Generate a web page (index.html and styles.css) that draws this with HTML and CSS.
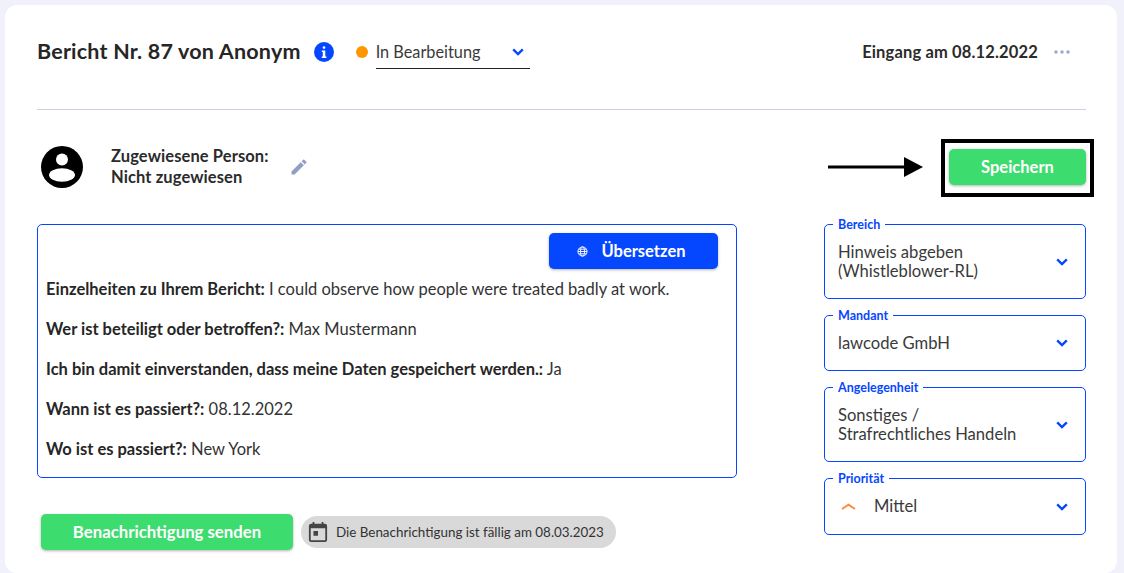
FILE: index.html
```html
<!DOCTYPE html>
<html lang="de">
  <head>
    <meta charset="UTF-8" />
    <title>Bericht Nr. 87</title>
    <link rel="stylesheet" href="styles.css">
  </head>

  <body>
    <div class="card">
      <div class="report-head">
        <h1>Bericht Nr. 87 von Anonym</h1>
        <svg class="info-icon" viewBox="0 0 20 20">
          <circle cx="10" cy="10" r="10" fill="#0547ff" />
          <rect x="8.7" y="4.3" width="2.6" height="2.6" rx="1.3" fill="#fff" />
          <path d="M7.8 8.4h3.5v6h1.1v1.5H7.8v-1.5h1v-4.5h-1z" fill="#fff" />
        </svg>
        <span class="status-dot"></span>
        <div class="status-select">
          <span>In Bearbeitung</span>
          <svg class="chevron" viewBox="0 0 12 8"><path d="M1.2 1.4 6 6l4.8-4.6" /></svg>
        </div>
        <div class="received">Eingang am 08.12.2022</div>
        <svg class="more-icon" viewBox="0 0 16 4">
          <circle cx="2" cy="2" r="1.7" />
          <circle cx="8" cy="2" r="1.7" />
          <circle cx="14" cy="2" r="1.7" />
        </svg>
      </div>

      <div class="assign-row">
        <div class="person">
          <svg class="avatar" viewBox="0 0 42 42">
            <circle cx="21" cy="21" r="21" fill="#000" />
            <circle cx="21" cy="13.5" r="6" fill="#fff" />
            <ellipse cx="21" cy="29" rx="13" ry="6.8" fill="#fff" />
          </svg>
          <div class="person-text">
            <div>Zugewiesene Person:</div>
            <div>Nicht zugewiesen</div>
          </div>
          <svg class="pencil" viewBox="0 0 24 24">
            <path d="M3 17.25V21h3.75L17.81 9.94l-3.75-3.75L3 17.25zM20.71 7.04a1 1 0 0 0 0-1.41l-2.34-2.34a1 1 0 0 0-1.41 0l-1.83 1.83 3.75 3.75 1.83-1.83z" />
          </svg>
        </div>
        <div class="save-area">
          <svg class="arrow" viewBox="0 0 95 20">
            <rect x="0" y="8.5" width="77" height="3" />
            <path d="M76 0 95 10 76 20z" />
          </svg>
          <div class="save-wrap">
            <button class="btn btn-green btn-save">Speichern</button>
            <span class="highlight"></span>
          </div>
        </div>
      </div>

      <div class="main">
        <div class="left-col">
          <div class="details">
            <div class="details-actions">
              <button class="btn btn-blue">
                <svg class="globe" viewBox="0 0 12 12">
                  <circle cx="6" cy="6" r="5" />
                  <ellipse cx="6" cy="6" rx="2.2" ry="5" />
                  <path d="M1 6h10M1.7 3.5h8.6M1.7 8.5h8.6" />
                </svg>
                Übersetzen
              </button>
            </div>
            <p><strong>Einzelheiten zu Ihrem Bericht:</strong> I could observe how people were treated badly at work.</p>
            <p><strong>Wer ist beteiligt oder betroffen?:</strong> Max Mustermann</p>
            <p><strong>Ich bin damit einverstanden, dass meine Daten gespeichert werden.:</strong> Ja</p>
            <p><strong>Wann ist es passiert?:</strong> 08.12.2022</p>
            <p><strong>Wo ist es passiert?:</strong> New York</p>
          </div>
          <div class="notify-row">
            <button class="btn btn-green btn-notify">Benachrichtigung senden</button>
            <div class="due-chip">
              <svg class="calendar" viewBox="0 0 20 22">
                <path d="M4 0h2v2h8V0h2v2h1.5A2.5 2.5 0 0 1 20 4.5v15a2.5 2.5 0 0 1-2.5 2.5h-15A2.5 2.5 0 0 1 0 19.5v-15A2.5 2.5 0 0 1 2.5 2H4zM2 7v12.5a.5.5 0 0 0 .5.5h15a.5.5 0 0 0 .5-.5V7zm3 3h5v5H5z" />
              </svg>
              <span>Die Benachrichtigung ist fällig am 08.03.2023</span>
            </div>
          </div>
        </div>

        <div class="right-col">
          <div class="field field-tall">
            <span class="field-label">Bereich</span>
            <div class="field-value">Hinweis abgeben<br>(Whistleblower-RL)</div>
            <svg class="chevron" viewBox="0 0 12 8"><path d="M1.2 1.4 6 6l4.8-4.6" /></svg>
          </div>
          <div class="field field-short">
            <span class="field-label">Mandant</span>
            <div class="field-value">lawcode GmbH</div>
            <svg class="chevron" viewBox="0 0 12 8"><path d="M1.2 1.4 6 6l4.8-4.6" /></svg>
          </div>
          <div class="field field-tall">
            <span class="field-label">Angelegenheit</span>
            <div class="field-value">Sonstiges /<br>Strafrechtliches Handeln</div>
            <svg class="chevron" viewBox="0 0 12 8"><path d="M1.2 1.4 6 6l4.8-4.6" /></svg>
          </div>
          <div class="field">
            <span class="field-label">Priorität</span>
            <svg class="priority-icon" viewBox="0 0 15 7"><path d="M1 6 7.5 1.6 14 6" /></svg>
            <div class="field-value">Mittel</div>
            <svg class="chevron" viewBox="0 0 12 8"><path d="M1.2 1.4 6 6l4.8-4.6" /></svg>
          </div>
        </div>
      </div>
    </div>
  </body>
</html>
```

FILE: styles.css
```css
html,
body {
  height: 573px;
  overflow: hidden;
}

body {
  margin: 0;
  padding: 5px 7px 0 5px;
  box-sizing: border-box;
  background-color: #f0f1fb;
  font-family: Lato, "Noto Sans", sans-serif;
  color: #2b2b2b;
}

.card {
  background: white;
  border-radius: 12px;
  padding: 27px 31px 0 32px;
  height: 568px;
  box-sizing: border-box;
}

.report-head {
  display: flex;
  align-items: center;
  height: 40px;
  padding-bottom: 37px;
  border-bottom: 1px solid #c9d3e0;
}

h1 {
  margin: 0 0 3px;
  font-size: 21.5px;
  font-weight: 700;
  letter-spacing: 0.2px;
  color: #262626;
}

.info-icon {
  width: 20px;
  height: 20px;
  margin-left: 13px;
}

.status-dot {
  width: 12px;
  height: 12px;
  margin-left: 22px;
  border-radius: 50%;
  background: #ff9500;
}

.status-select {
  display: flex;
  align-items: center;
  justify-content: space-between;
  box-sizing: border-box;
  width: 154px;
  height: 34px;
  margin-left: 8px;
  padding: 0 6px 0 0;
  border-bottom: 1px solid #222;
  font-size: 16.3px;
  color: #3a3a3a;
}

.chevron {
  width: 12px;
  height: 8px;
  flex-shrink: 0;
  fill: none;
  stroke: #0547ff;
  stroke-width: 2.4;
}

.received {
  margin-left: auto;
  font-size: 16.5px;
  letter-spacing: 0.15px;
  font-weight: 700;
}

.more-icon {
  width: 16px;
  height: 4px;
  margin-left: 16px;
  margin-right: 16px;
  fill: #9aa8cc;
}

.assign-row {
  display: flex;
  align-items: center;
  justify-content: space-between;
  height: 42px;
  padding: 36px 0;
}

.person {
  display: flex;
  align-items: center;
}

.avatar {
  width: 42px;
  height: 42px;
  margin-left: 4px;
}

.person-text {
  margin-left: 28px;
  font-size: 16.5px;
  letter-spacing: 0.1px;
  font-weight: 700;
  line-height: 21px;
}

.pencil {
  width: 20px;
  height: 20px;
  margin-left: 20px;
  fill: #8f9fc4;
}

.save-area {
  display: flex;
  align-items: center;
}

.arrow {
  width: 95px;
  height: 20px;
  margin-right: 26px;
}

.save-wrap {
  position: relative;
  display: flex;
}

.highlight {
  position: absolute;
  inset: -10px -8px -12px -8px;
  border: 4px solid #000;
}

.btn {
  display: inline-flex;
  align-items: center;
  justify-content: center;
  height: 36px;
  border: none;
  border-radius: 5px;
  font-family: inherit;
  font-size: 16.5px;
  font-weight: 700;
  color: white;
  box-shadow: 0 1px 3px rgba(0, 0, 0, 0.3);
}

.btn-green {
  background: #3ddc6e;
}

.btn-blue {
  background: #0547ff;
  width: 169px;
  gap: 13px;
  padding: 0 4px 0 0;
}

.btn-save {
  width: 137px;
}

.main {
  display: flex;
  justify-content: space-between;
}

.left-col {
  width: 700px;
}

.details {
  box-sizing: border-box;
  height: 254px;
  padding: 8px 18px 16px 8px;
  border: 1px solid #0547ff;
  border-radius: 5px;
  font-size: 16.5px;
}

.details-actions {
  display: flex;
  justify-content: flex-end;
  margin-bottom: 8px;
}

.globe {
  width: 11px;
  height: 11px;
  fill: none;
  stroke: white;
  stroke-width: 1;
}

.details p {
  margin: 0 0 16px;
  line-height: 24px;
  color: #333;
}

.details p:last-child {
  margin-bottom: 0;
}

.details strong {
  font-weight: 700;
  color: #262626;
}

.notify-row {
  display: flex;
  align-items: center;
  margin-top: 36px;
  margin-left: 4px;
}

.btn-notify {
  width: 252px;
  padding-bottom: 2px;
  font-size: 16.75px;
}

.due-chip {
  display: flex;
  align-items: center;
  box-sizing: border-box;
  width: 315px;
  height: 32px;
  margin-left: 8px;
  padding-left: 7px;
  border-radius: 16px;
  background: #d9d9d9;
  font-size: 13.4px;
  color: #333;
}

.calendar {
  width: 20px;
  height: 20px;
  margin-right: 8px;
  fill: #444;
}

.right-col {
  display: flex;
  flex-direction: column;
  gap: 16px;
  width: 262px;
}

.field {
  position: relative;
  display: flex;
  align-items: center;
  box-sizing: border-box;
  height: 57px;
  padding: 0 17px 0 13px;
  border: 1px solid #0547ff;
  border-radius: 5px;
  font-size: 16.6px;
  color: #3a3a3a;
}

.field-tall {
  height: 75px;
}

.field-short {
  height: 56px;
}

.field-value {
  flex: 1;
  line-height: 19px;
}

.field-label {
  position: absolute;
  top: -7px;
  left: 8px;
  padding: 0 5px;
  background: white;
  font-size: 12.5px;
  line-height: 14px;
  font-weight: 700;
  color: #0547ff;
}

.priority-icon {
  width: 15px;
  height: 7px;
  margin-left: 3px;
  margin-right: 18px;
  fill: none;
  stroke: #ff8a3c;
  stroke-width: 2;
}
```
